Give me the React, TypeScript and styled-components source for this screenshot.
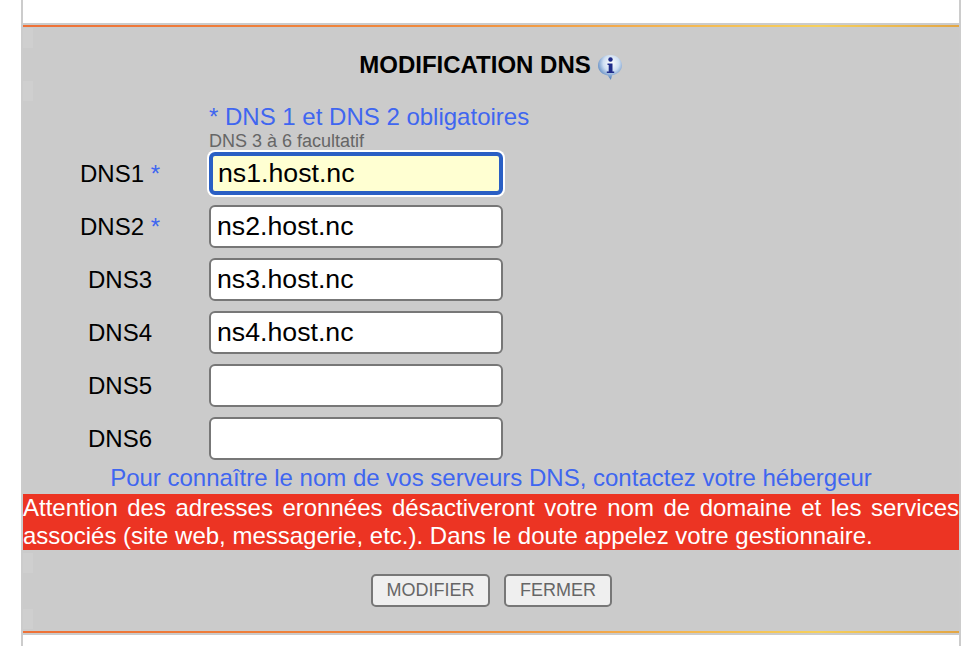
import React from 'react';
import styled, { createGlobalStyle } from 'styled-components';

const GlobalStyle = createGlobalStyle`
  html, body {
    margin: 0;
    padding: 0;
    height: 646px;
    background: #ffffff;
    overflow: hidden;
    font-family: "Liberation Sans", Arial, sans-serif;
  }
`;

const Frame = styled.div`
  box-sizing: border-box;
  width: 940px;
  height: 646px;
  margin-left: 21px;
  border-left: 2px solid #cccccc;
  border-right: 2px solid #cccccc;
  padding-top: 23px;
`;

const Rule = styled.div`
  height: 2px;
  background: linear-gradient(90deg, #ee7137 0%, #f08a3c 45%, #f6d05c 85%, #e3a644 100%);
`;

const Panel = styled.div`
  height: 612px;
  background-color: #cbcbcb;
  padding: 2px 0;
  box-sizing: border-box;
  display: flex;
  flex-direction: column;
`;

const Content = styled.form`
  flex: 1;
  display: flex;
  flex-direction: column;
  margin: 0;
  background-color: #cbcbcb;
  background-image: linear-gradient(#cfcfcf, #cfcfcf), linear-gradient(#cfcfcf, #cfcfcf),
    linear-gradient(#cfcfcf, #cfcfcf), linear-gradient(#cfcfcf, #cfcfcf);
  background-repeat: no-repeat;
  background-size: 10px 20px;
  background-position: 0 1px, 0 54px, 0 526px, 0 582px;
`;

const Title = styled.h1`
  margin: 23px 0 0;
  height: 30px;
  display: flex;
  align-items: center;
  justify-content: center;
  gap: 6px;
  font-size: 24px;
  font-weight: 700;
  color: #000000;
`;

const IconSvg = styled.svg`
  margin-top: 3px;
`;

const Notes = styled.div`
  margin: 23px 0 0 186px;
  height: 46px;
`;

const Required = styled.div`
  font-size: 24px;
  line-height: 28px;
  color: #3f66f0;
`;

const Optional = styled.div`
  font-size: 18px;
  line-height: 18px;
  margin-top: 1px;
  color: #666666;
`;

const Rows = styled.div`
  display: flex;
  flex-direction: column;
  gap: 11px;
  margin-top: 3px;
`;

const Row = styled.div`
  display: flex;
  align-items: center;
  height: 42px;
`;

const Label = styled.label`
  width: 194px;
  padding-top: 2px;
  text-align: center;
  font-size: 24px;
  color: #000000;
`;

const Star = styled.span`
  color: #3f66f0;
`;

const Field = styled.input<{ $focused?: boolean }>`
  box-sizing: border-box;
  width: 294px;
  height: 43px;
  margin-left: -8px;
  padding: 0 ${(p) => (p.$focused ? '5px' : '6px')};
  font-family: "Liberation Sans", Arial, sans-serif;
  font-size: 26.7px;
  color: #000000;
  border-radius: 6px;
  outline: none;
  background: ${(p) => (p.$focused ? '#ffffd2' : '#ffffff')};
  border: ${(p) => (p.$focused ? '4px solid #2a5fc4' : '2px solid #777777')};
  box-shadow: ${(p) => (p.$focused ? '0 0 0 2px #ffffff' : 'none')};
`;

const Contact = styled.div`
  margin-top: 5px;
  height: 28px;
  line-height: 28px;
  text-align: center;
  font-size: 24px;
  color: #3f66f0;
`;

const Warning = styled.div`
  background: #ec3423;
  color: #ffffff;
  font-size: 24px;
  line-height: 28px;
  height: 56px;
  text-align: justify;
  margin-top: 2px;
`;

const Actions = styled.div`
  display: flex;
  justify-content: center;
  gap: 14px;
  margin-top: 24px;
`;

const ActionButton = styled.button<{ $width: number }>`
  box-sizing: border-box;
  width: ${(p) => p.$width}px;
  height: 33px;
  padding: 0 0 0 1px;
  font-family: "Liberation Sans", Arial, sans-serif;
  font-size: 18px;
  color: #666666;
  background: #efefef;
  border: 2px solid #777777;
  border-radius: 5px;
`;

const InfoIcon = () => (
  <IconSvg width="26" height="28" viewBox="0 0 26 28" aria-hidden="true">
    <defs>
      <radialGradient id="bubble" cx="55%" cy="32%" r="60%">
        <stop offset="0%" stopColor="#ffffff" />
        <stop offset="55%" stopColor="#cfdff2" />
        <stop offset="100%" stopColor="#5f8ac2" />
      </radialGradient>
    </defs>
    <path
      d="M13 2C6.200 2 1 6.400 1 12.500c0 5.400 4.600 9.300 9.800 9.900L13.800 27l1.400-4.800c5.200-.9 9.800-4.500 9.800-9.700C25 6.400 19.800 2 13 2z"
      fill="url(#bubble)"
    />
    <circle cx="13.500" cy="6.500" r="2.200" fill="#1f2c8a" />
    <path d="M10.500 10.500h5v8h1.700V20H9.800v-1.500h1.900v-6.500h-1.200z" fill="#1f2c8a" />
  </IconSvg>
);

const dnsRows = [
  { name: 'DNS1', value: 'ns1.host.nc', required: true, focused: true },
  { name: 'DNS2', value: 'ns2.host.nc', required: true },
  { name: 'DNS3', value: 'ns3.host.nc' },
  { name: 'DNS4', value: 'ns4.host.nc' },
  { name: 'DNS5', value: '' },
  { name: 'DNS6', value: '' },
];

export default function App() {
  return (
    <>
      <GlobalStyle />
      <Frame>
        <Panel>
          <Rule />
          <Content onSubmit={(e) => e.preventDefault()}>
            <Title>
              MODIFICATION DNS <InfoIcon />
            </Title>
            <Notes>
              <Required>* DNS 1 et DNS 2 obligatoires</Required>
              <Optional>DNS 3 à 6 facultatif</Optional>
            </Notes>
            <Rows>
              {dnsRows.map((row) => (
                <Row key={row.name}>
                  <Label>
                    {row.name}
                    {row.required && <Star> *</Star>}
                  </Label>
                  <Field defaultValue={row.value} $focused={row.focused} />
                </Row>
              ))}
            </Rows>
            <Contact>Pour connaître le nom de vos serveurs DNS, contactez votre hébergeur</Contact>
            <Warning>
              Attention des adresses eronnées désactiveront votre nom de domaine et les services
              associés (site web, messagerie, etc.). Dans le doute appelez votre gestionnaire.
            </Warning>
            <Actions>
              <ActionButton $width={119}>MODIFIER</ActionButton>
              <ActionButton $width={108}>FERMER</ActionButton>
            </Actions>
          </Content>
          <Rule />
        </Panel>
      </Frame>
    </>
  );
}
